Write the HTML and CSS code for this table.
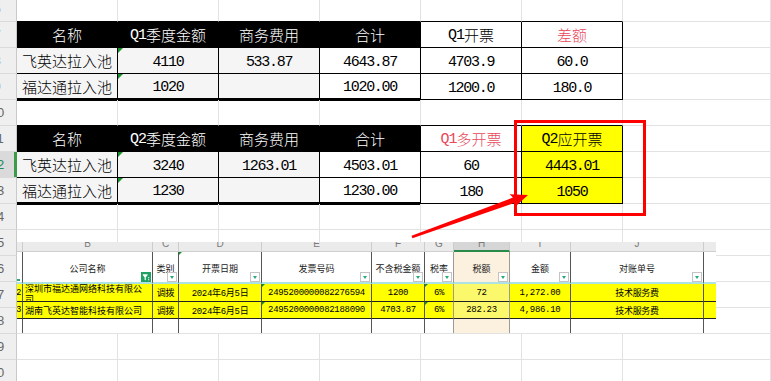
FILE: index.html
```html
<!DOCTYPE html>
<html lang="zh-CN">
<head>
<meta charset="utf-8">
<title>Sheet</title>
<link rel="stylesheet" href="styles.css">
</head>
<body>
<div class="page">
  <div class="sheet">
    <div class="row">
      <div class="rh"><span>6</span></div>
      <div class="c tb"></div><div class="c tb"></div><div class="c tb"></div><div class="c tb"></div><div class="c tb"></div><div class="c tb"></div><div class="c"></div>
    </div>
    <div class="row">
      <div class="rh"><span>7</span></div>
      <div class="c hd">名称</div>
      <div class="c hd"><span class="q">Q1</span>季度金额</div>
      <div class="c hd">商务费用</div>
      <div class="c hd">合计</div>
      <div class="c bk"><span class="q">Q1</span>开票</div>
      <div class="c bk red">差额</div>
      <div class="c"></div>
    </div>
    <div class="row">
      <div class="rh"><span>8</span></div>
      <div class="c bk gr">飞英达拉入池</div>
      <div class="c bk gr n tri">4110</div>
      <div class="c bk gr n">533.87</div>
      <div class="c bk n">4643.87</div>
      <div class="c bk n">4703.9</div>
      <div class="c bk n">60.0</div>
      <div class="c"></div>
    </div>
    <div class="row">
      <div class="rh"><span>9</span></div>
      <div class="c bk gr thick">福达通拉入池</div>
      <div class="c bk gr n tri thick">1020</div>
      <div class="c bk gr thick"></div>
      <div class="c bk n thick">1020.00</div>
      <div class="c bk n">1200.0</div>
      <div class="c bk n">180.0</div>
      <div class="c"></div>
    </div>
    <div class="row">
      <div class="rh"><span>10</span></div>
      <div class="c tb"></div><div class="c tb"></div><div class="c tb"></div><div class="c tb"></div><div class="c tb"></div><div class="c tb"></div><div class="c"></div>
    </div>
    <div class="row">
      <div class="rh"><span>11</span></div>
      <div class="c hd">名称</div>
      <div class="c hd"><span class="q">Q2</span>季度金额</div>
      <div class="c hd">商务费用</div>
      <div class="c hd">合计</div>
      <div class="c bk red"><span class="q">Q1</span>多开票</div>
      <div class="c bk yl"><span class="q">Q2</span>应开票</div>
      <div class="c"></div>
    </div>
    <div class="row">
      <div class="rh sel"><span>12</span></div>
      <div class="c bk gr">飞英达拉入池</div>
      <div class="c bk gr n tri">3240</div>
      <div class="c bk gr n">1263.01</div>
      <div class="c bk n">4503.01</div>
      <div class="c bk n">60</div>
      <div class="c bk yl n">4443.01</div>
      <div class="c"></div>
    </div>
    <div class="row">
      <div class="rh"><span>13</span></div>
      <div class="c bk gr thick">福达通拉入池</div>
      <div class="c bk gr n tri thick">1230</div>
      <div class="c bk gr thick"></div>
      <div class="c bk n thick">1230.00</div>
      <div class="c bk n">180</div>
      <div class="c bk yl n">1050</div>
      <div class="c"></div>
    </div>
    <div class="row">
      <div class="rh"><span>14</span></div>
      <div class="c"></div><div class="c"></div><div class="c"></div><div class="c"></div><div class="c"></div><div class="c"></div><div class="c"></div>
    </div>
    <div class="row">
      <div class="rh"><span>15</span></div>
      <div class="c"></div><div class="c"></div><div class="c"></div><div class="c"></div><div class="c"></div><div class="c"></div><div class="c"></div>
    </div>
    <div class="row">
      <div class="rh"><span>16</span></div>
      <div class="c"></div><div class="c"></div><div class="c"></div><div class="c"></div><div class="c"></div><div class="c"></div><div class="c"></div>
    </div>
    <div class="row">
      <div class="rh"><span>17</span></div>
      <div class="c"></div><div class="c"></div><div class="c"></div><div class="c"></div><div class="c"></div><div class="c"></div><div class="c"></div>
    </div>
    <div class="row">
      <div class="rh"><span>18</span></div>
      <div class="c"></div><div class="c"></div><div class="c"></div><div class="c"></div><div class="c"></div><div class="c"></div><div class="c"></div>
    </div>
    <div class="row">
      <div class="rh"><span>19</span></div>
      <div class="c"></div><div class="c"></div><div class="c"></div><div class="c"></div><div class="c"></div><div class="c"></div><div class="c"></div>
    </div>
    <div class="row">
      <div class="rh"><span>20</span></div>
      <div class="c"></div><div class="c"></div><div class="c"></div><div class="c"></div><div class="c"></div><div class="c"></div><div class="c"></div>
    </div>
  </div>

  <div class="paste">
    <div class="p bd"></div>
    <div class="p bd"><span>B</span></div>
    <div class="p bd"><span>C</span></div>
    <div class="p bd"><span>D</span></div>
    <div class="p bd"><span>E</span></div>
    <div class="p bd"><span>F</span></div>
    <div class="p bd"><span>G</span></div>
    <div class="p bd hs"><span>H</span></div>
    <div class="p bd"><span>I</span></div>
    <div class="p bd"><span>J</span></div>
    <div class="p bd end"></div>

    <div class="p hh"><i class="cut"></i></div>
    <div class="p hh">公司名称<i class="dd on"><svg width="8" height="8" viewBox="0 0 8 8"><path d="M0.8 1.2h4.8v1.1L3.8 4.2v3.2l-1.2-0.6V4.2L0.8 2.3z" fill="#fff"/><rect x="6.1" y="4.2" width="1.1" height="1.1" fill="#fff"/><rect x="6.1" y="6.2" width="1.1" height="1.1" fill="#fff"/></svg></i></div>
    <div class="p hh">类别<i class="dd"></i></div>
    <div class="p hh ct">开票日期<i class="dd"></i></div>
    <div class="p hh">发票号码<i class="dd"></i></div>
    <div class="p hh">不含税金额<i class="dd"></i></div>
    <div class="p hh lg">税率<i class="dd"></i></div>
    <div class="p hh bh lg">税额<i class="dd"></i></div>
    <div class="p hh">金额<i class="dd"></i></div>
    <div class="p hh">对账单号<i class="dd"></i></div>
    <div class="p hh end"></div>

    <div class="p dr r">2</div>
    <div class="p dr lf wrap"><span>深圳市福达通网络科技有限公<br>司</span></div>
    <div class="p dr">调拨</div>
    <div class="p dr">2024年6月5日</div>
    <div class="p dr ct">2495200000082276594</div>
    <div class="p dr">1200</div>
    <div class="p dr ct lg">6%</div>
    <div class="p dr hc lg">72</div>
    <div class="p dr">1,272.00</div>
    <div class="p dr">技术服务费</div>
    <div class="p dr end"></div>

    <div class="p dr r">3</div>
    <div class="p dr lf">湖南飞英达智能科技有限公司</div>
    <div class="p dr">调拨</div>
    <div class="p dr">2024年6月5日</div>
    <div class="p dr ct">2495200000082188090</div>
    <div class="p dr">4703.87</div>
    <div class="p dr ct lg">6%</div>
    <div class="p dr hc lg">282.23</div>
    <div class="p dr">4,986.10</div>
    <div class="p dr">技术服务费</div>
    <div class="p dr end"></div>

    <div class="p"></div>
    <div class="p"></div>
    <div class="p"></div>
    <div class="p"></div>
    <div class="p"></div>
    <div class="p"></div>
    <div class="p lg"></div>
    <div class="p bh lg"></div>
    <div class="p"></div>
    <div class="p"></div>
    <div class="p end"></div>
  </div>

  <div class="redbox"></div>
  <svg class="arrow" width="771" height="381" viewBox="0 0 771 381">
    <polygon points="411.55,235.78 512.95,197.52 509.63,194.25 528,195 514.43,207.41 514.87,202.78 412.45,238.22" fill="#ff0000"/>
  </svg>
</div>
</body>
</html>
```

FILE: styles.css
```css
* { box-sizing: border-box; }
html, body { margin: 0; padding: 0; }
body {
  width: 771px;
  height: 381px;
  overflow: hidden;
  background: #fff;
  font-family: "Noto Sans CJK SC", sans-serif;
}
.page {
  position: relative;
  width: 771px;
  height: 381px;
  overflow: hidden;
}
.sheet {
  margin-top: -4px;
  display: flex;
  flex-direction: column;
}
.row {
  display: grid;
  grid-template-columns: 17px repeat(6, 101px) 1fr;
  height: 26px;
}
.rh {
  background: #efefef;
  border-right: 1px solid #c9c9c9;
  border-bottom: 1px solid #dadada;
  display: flex;
  align-items: center;
  overflow: hidden;
  font-family: "Liberation Sans", sans-serif;
  font-size: 13px;
  color: #666;
}
.rh span {
  flex-shrink: 0;
  width: 40px;
  margin-left: -23px;
  text-align: center;
}
.rh.sel {
  background: #dadada;
  color: #1f8a5a;
  border-right-color: #3c9a48;
  box-shadow: inset -2px 0 0 #3c9a48;
}
.c {
  position: relative;
  border-right: 1px solid #e2e2e2;
  border-bottom: 1px solid #e2e2e2;
  display: flex;
  align-items: center;
  justify-content: center;
  font-family: "Noto Sans CJK SC", sans-serif;
  font-size: 15px;
  font-weight: 300;
  color: #000;
  white-space: nowrap;
}
.n {
  font-family: "Liberation Mono", monospace;
  font-weight: 400;
  letter-spacing: -1.3px;
  padding-top: 3px;
}
.q {
  font-family: "Liberation Mono", monospace;
  font-weight: 400;
  letter-spacing: -1px;
  padding-top: 2px;
}
.hd { background: #000; color: #fff; border-color: #000; }
.bk { border-right-color: #000; border-bottom-color: #000; }
.tb { border-bottom-color: #000; }
.gr { background: #f5f5f5; }
.yl { background: #ffff00; }
.red { color: #e8485a; }
.thick {
  border-bottom: 2px solid #000;
  box-shadow: 0 1px 0 #000;
}
.tri::before {
  content: "";
  position: absolute;
  left: 0;
  top: 0;
  border-top: 5px solid #1a8f2a;
  border-right: 5px solid transparent;
}

/* pasted screenshot */
.paste {
  position: absolute;
  left: 17px;
  top: 242px;
  width: 699px;
  display: grid;
  grid-template-columns: 6px 130px 26px 83px 110px 53px 29px 56px 61px 133px 12px;
  grid-template-rows: 10px 32px 18px 17px 14px;
  background: #fff;
  font-family: "Liberation Mono", "Noto Sans CJK SC", monospace;
  font-size: 9px;
  color: #000;
}
.p {
  position: relative;
  border-right: 1px solid #555;
  display: flex;
  align-items: center;
  justify-content: center;
  overflow: hidden;
  white-space: nowrap;
  letter-spacing: -0.3px;
}
.p.lg { border-right-color: #9a9a9a; }
.p.end { border-right: none; }
.bd {
  background: #ebebeb;
  border-right-color: #cdcdcd;
  border-bottom: 1px solid #cfcfcf;
  align-items: flex-start;
  color: #7a7a7a;
  font-family: "Liberation Sans", sans-serif;
  font-size: 10px;
  letter-spacing: 0;
}
.bd span { line-height: 10px; margin-top: -3px; }
.bd.hs { background: #d6d6d6; border-bottom: 2px solid #2a8a4a; }
.hh {
  border-bottom: 2px solid #aee3e6;
  color: #222;
  padding-top: 2px;
  letter-spacing: 0;
}
.bh { background: #fbf1de; }
.dr { background: #ffff00; border-bottom: 1px solid #222; }
.dr.hc { background: #fcf86c; }
.r { justify-content: flex-end; padding-right: 1px; }
.lf { justify-content: flex-start; padding-left: 2px; letter-spacing: 0; }
.wrap {
  align-items: flex-start;
  line-height: 11px;
  padding-top: 1px;
  white-space: normal;
}
.dd {
  position: absolute;
  right: 1px;
  bottom: 0;
  width: 10px;
  height: 10px;
  background: #fff;
  border: 1px solid #c4c4c4;
  display: flex;
  align-items: center;
  justify-content: center;
}
.dd::after {
  content: "";
  border-top: 3px solid #2aa876;
  border-left: 2.5px solid transparent;
  border-right: 2.5px solid transparent;
}
.dd.on { background: #20a064; border-color: #20a064; }
.dd.on::after { display: none; }
.cut {
  position: absolute;
  left: 0;
  bottom: 1px;
  width: 3px;
  height: 2px;
  background: #2aa876;
}
.ct::before {
  content: "";
  position: absolute;
  left: 0;
  top: 0;
  border-top: 3px solid #1a8f2a;
  border-right: 3px solid transparent;
}

.redbox {
  position: absolute;
  left: 514px;
  top: 120px;
  width: 132px;
  height: 96px;
  border: 3px solid #ff0000;
}
.arrow {
  position: absolute;
  left: 0;
  top: 0;
  pointer-events: none;
}
```
